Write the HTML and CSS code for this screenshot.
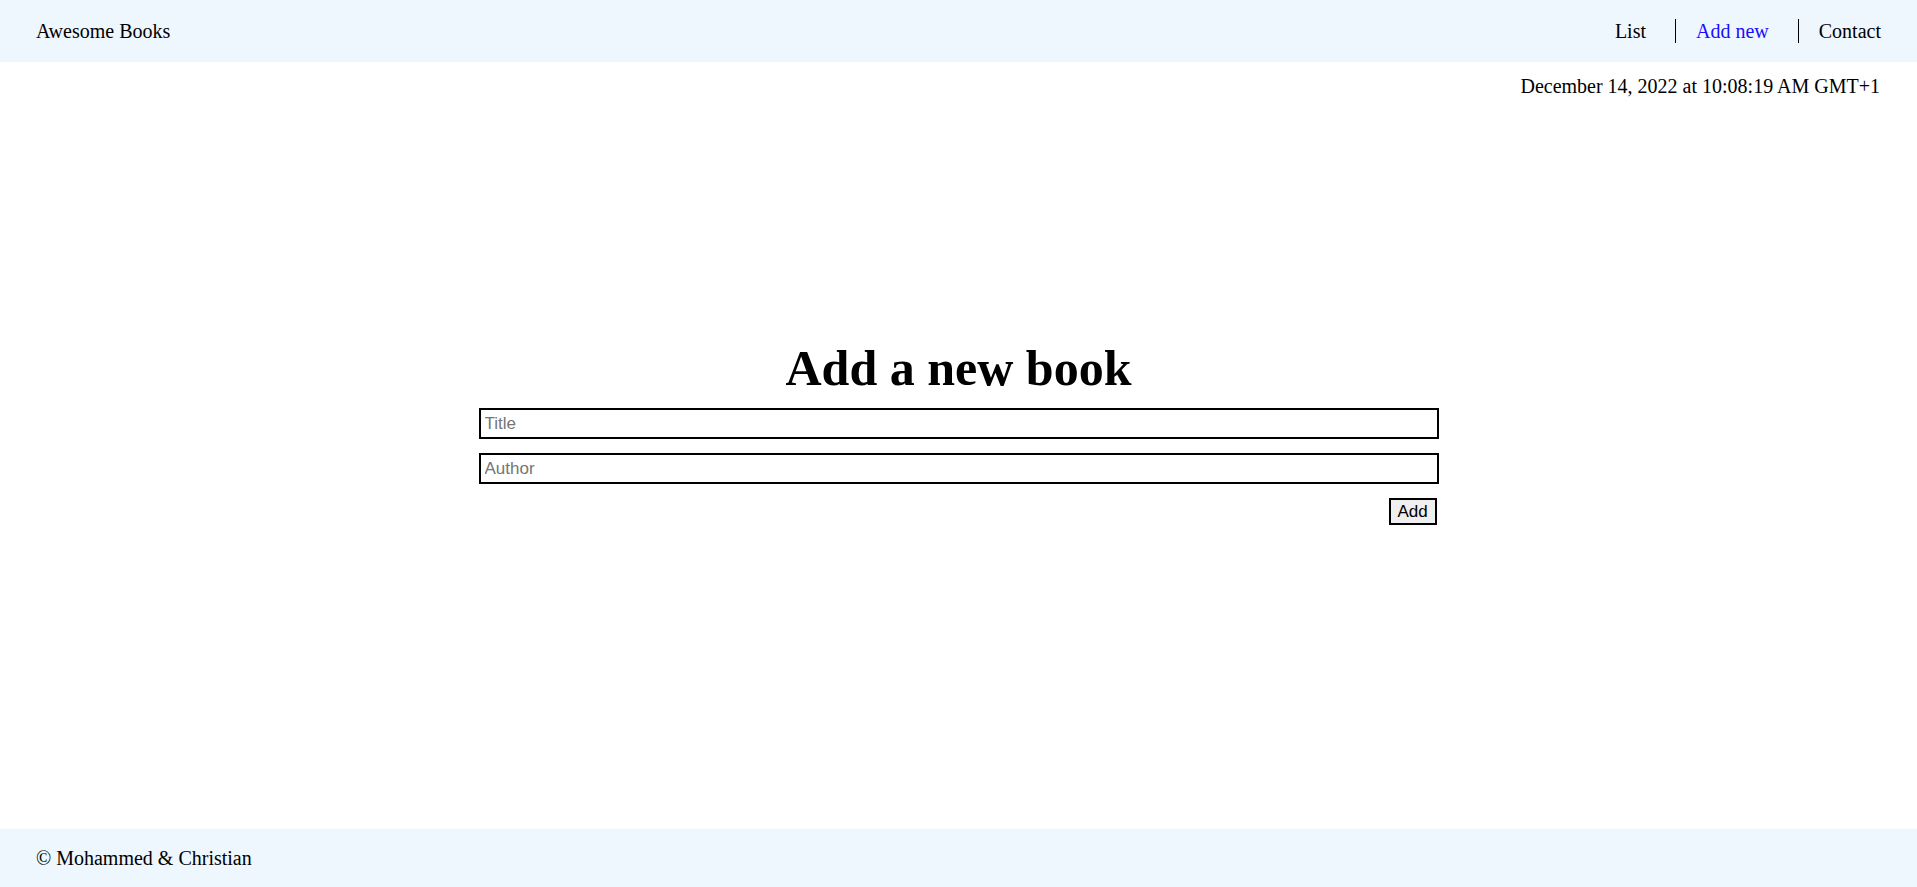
FILE: index.html
```html
<!DOCTYPE html>
<html lang="en">
<head>
<meta charset="utf-8">
<title>Awesome Books</title>
<link rel="stylesheet" href="styles.css">
</head>
<body>
<header class="topbar">
  <a class="brand" href="#">Awesome Books</a>
  <ul class="nav">
    <li class="nav-item"><a href="#">List</a></li>
    <li class="nav-item"><a class="active" href="#">Add new</a></li>
    <li class="nav-item"><a href="#">Contact</a></li>
  </ul>
</header>
<main class="content">
  <p class="date">December 14, 2022 at 10:08:19 AM GMT+1</p>
  <section class="add-section">
    <h1 class="heading">Add a new book</h1>
    <form class="book-form">
      <input class="field" type="text" placeholder="Title">
      <input class="field" type="text" placeholder="Author">
      <div class="actions"><button class="add-btn" type="button">Add</button></div>
    </form>
  </section>
</main>
<footer class="footer">
  <p class="copy">© Mohammed &amp; Christian</p>
</footer>
</body>
</html>
```
FILE: styles.css
```css
* { box-sizing: border-box; }
html, body { height: 100%; }
body {
  margin: 0;
  font-family: "Liberation Serif", "Times New Roman", serif;
  font-size: 20px;
  color: #000;
  display: flex;
  flex-direction: column;
  background: #fff;
}
a { color: #000; text-decoration: none; }
.topbar {
  height: 62px;
  flex: none;
  background: #eef6fe;
  display: flex;
  align-items: center;
  justify-content: space-between;
  padding: 0 36px 0 36px;
}
.nav {
  list-style: none;
  margin: 0;
  padding: 0;
  display: flex;
  align-items: center;
}
.nav-item {
  padding: 0 29px 0 20px;
  line-height: 24px;
}
.nav-item + .nav-item { border-left: 1px solid #000; }
.nav-item:last-child { padding-right: 0; }
.nav-item .active { color: #1a0dff; }
.content {
  flex: 1;
  display: flex;
  flex-direction: column;
}
.date {
  margin: 0;
  padding: 12px 37px 0 0;
  text-align: right;
  line-height: 24px;
}
.add-section {
  flex: 1;
  display: flex;
  flex-direction: column;
  align-items: center;
  justify-content: center;
  padding-bottom: 62px;
}
.heading {
  margin: 0 0 12px;
  font-size: 50px;
  line-height: 56px;
  font-weight: bold;
}
.book-form {
  width: 960px;
  display: flex;
  flex-direction: column;
  gap: 14px;
}
.field {
  height: 31px;
  border: 2px solid #000;
  padding: 0 4px;
  font-family: "Liberation Sans", Arial, sans-serif;
  font-size: 17px;
  outline: none;
}
.field::placeholder { color: #757575; }
.actions {
  display: flex;
  justify-content: flex-end;
  margin-right: 2px;
}
.add-btn {
  width: 48px;
  height: 27px;
  border: 2px solid #000;
  background: #efefef;
  font-family: "Liberation Sans", Arial, sans-serif;
  font-size: 17px;
  padding: 0;
  color: #000;
}
.footer {
  height: 58px;
  flex: none;
  background: #eef6fe;
  display: flex;
  align-items: center;
  padding: 0 36px;
}
.copy { margin: 0; }
```
